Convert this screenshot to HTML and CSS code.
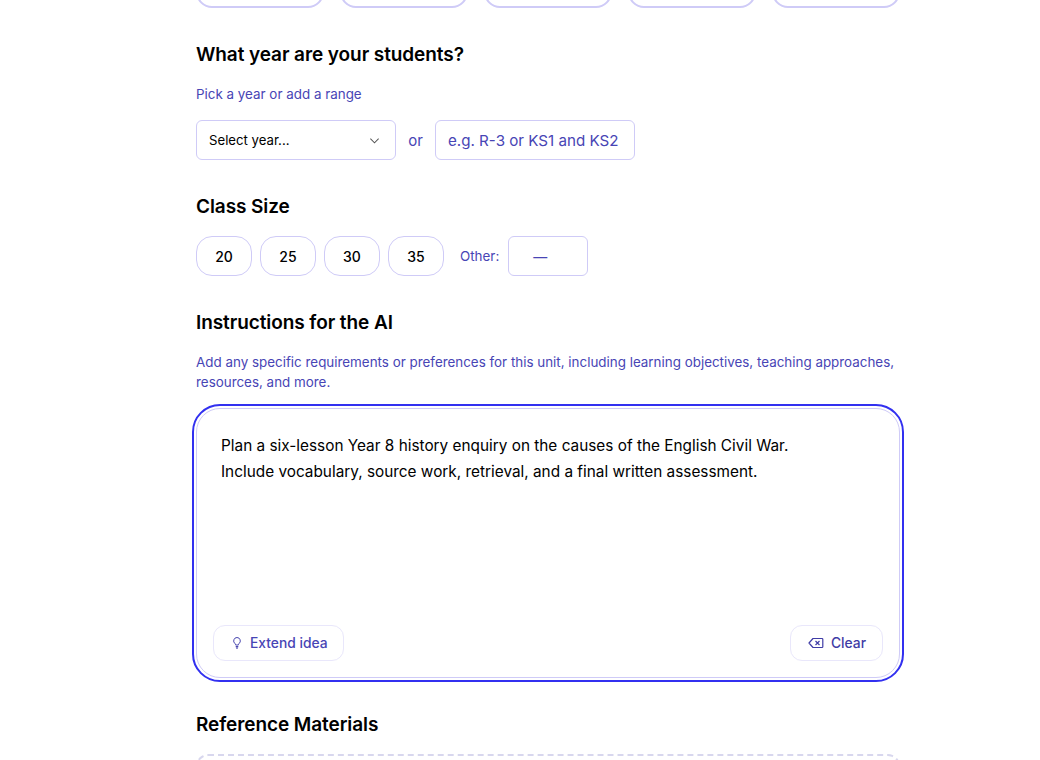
FILE: index.html
```html
<!DOCTYPE html>
<html lang="en">
<head>
<meta charset="utf-8">
<title>Unit planner</title>
<link rel="stylesheet" href="styles.css">
</head>
<body>
<main class="form">
  <div class="pills">
    <div class="pill"></div><div class="pill"></div><div class="pill"></div><div class="pill"></div><div class="pill"></div>
  </div>

  <section class="year">
    <h2>What year are your students?</h2>
    <p class="hint year-hint">Pick a year or add a range</p>
    <div class="row">
      <div class="select">
        <span>Select year...</span>
        <svg class="chev" viewBox="0 0 12 12" width="11" height="11"><path d="M1.5 4l4.5 4.5L10.5 4" fill="none" stroke="#555" stroke-width="1.1"/></svg>
      </div>
      <span class="or">or</span>
      <div class="range">e.g. R-3 or KS1 and KS2</div>
    </div>
  </section>

  <section class="size">
    <h2>Class Size</h2>
    <div class="sizes">
      <div class="num">20</div><div class="num">25</div><div class="num">30</div><div class="num">35</div>
      <span class="other">Other:</span>
      <div class="other-box">—</div>
    </div>
  </section>

  <section class="instr">
    <h2>Instructions for the AI</h2>
    <p class="hint instr-hint">Add any specific requirements or preferences for this unit, including learning objectives, teaching approaches, resources, and more.</p>
    <div class="editor">
      <div class="text">Plan a six-lesson Year 8 history enquiry on the causes of the English Civil War.<br>Include vocabulary, source work, retrieval, and a final written assessment.</div>
      <div class="tools">
        <div class="tool extend">
          <svg viewBox="0 0 12 14" width="12" height="14"><path d="M6 1.5a3.4 3.4 0 0 0-2 6.1c.4.4.6.8.6 1.4h2.8c0-.6.2-1 .6-1.4a3.4 3.4 0 0 0-2-6.1z" fill="none" stroke="#4a47b0" stroke-width="1"/><path d="M4.7 10.6h2.6M5.2 12.2h1.6" stroke="#4a47b0" stroke-width="1.2" fill="none"/></svg>
          <span>Extend idea</span>
        </div>
        <div class="tool clear">
          <svg viewBox="0 0 16 12" width="16" height="12"><path d="M5 1.5h9a.8.8 0 0 1 .8.8v7.4a.8.8 0 0 1-.8.8H5L1 6z" fill="none" stroke="#3f3ca6" stroke-width="1.2" stroke-linejoin="round"/><path d="M7.5 4l4 4M11.5 4l-4 4" stroke="#3f3ca6" stroke-width="1.2" fill="none"/></svg>
          <span>Clear</span>
        </div>
      </div>
    </div>
  </section>

  <section class="refs">
    <h2>Reference Materials</h2>
    <div class="drop"></div>
  </section>
</main>
</body>
</html>
```

FILE: styles.css
```css
html, body {
  margin: 0;
  height: 760px;
  overflow: hidden;
  background: #fff;
}
body {
  font-family: Inter, "Liberation Sans", sans-serif;
  color: #000;
}
.form {
  width: 704px;
  margin: -40px 0 0 196px;
}
h2 {
  margin: 0;
  font-size: 19px;
  line-height: 24px;
  font-weight: 600;
  letter-spacing: -0.08px;
}
.hint {
  margin: 0;
  font-size: 13.4px;
  line-height: 20px;
  color: #4845b5;
}
.pills {
  display: flex;
  gap: 16px;
}
.pill {
  flex: 1;
  height: 44px;
  border: 2px solid #cfcbf7;
  border-radius: 16px;
  background: #fff;
}
.year { margin-top: 35px; }
.year-hint { margin-top: 17px; }
.row {
  display: flex;
  align-items: center;
  margin-top: 16px;
}
.select {
  width: 200px;
  height: 40px;
  box-sizing: border-box;
  border: 1px solid #cfcbf7;
  border-radius: 6px;
  padding: 0 15px 0 12px;
  display: flex;
  align-items: center;
  justify-content: space-between;
  font-size: 13.2px;
}
.or {
  width: 39px;
  text-align: center;
  font-size: 15px;
  color: #4845b5;
}
.range {
  width: 200px;
  height: 40px;
  box-sizing: border-box;
  border: 1px solid #cfcbf7;
  border-radius: 6px;
  padding: 0 12px;
  display: flex;
  align-items: center;
  font-size: 15.15px;
  color: #4845b5;
  white-space: nowrap;
}
.size { margin-top: 35px; }
.sizes {
  display: flex;
  align-items: center;
  gap: 8px;
  margin-top: 17px;
}
.num {
  width: 56px;
  height: 40px;
  box-sizing: border-box;
  border: 1px solid #cfcbf7;
  border-radius: 16px;
  display: flex;
  align-items: center;
  justify-content: center;
  font-size: 14px;
  font-weight: 500;
}
.other {
  margin-left: 8px;
  margin-right: 1px;
  font-size: 13.4px;
  color: #4845b5;
}
.other-box {
  width: 80px;
  height: 40px;
  box-sizing: border-box;
  border: 1px solid #cfcbf7;
  border-radius: 6px;
  padding-left: 24px;
  display: flex;
  align-items: center;
  font-size: 14px;
  color: #4845b5;
}
.instr { margin-top: 35px; }
.instr-hint { margin-top: 17px; }
.editor {
  margin-top: 16px;
  height: 270px;
  box-sizing: border-box;
  border: 1px solid #cfcbf7;
  border-radius: 24px;
  outline: 2px solid #3230f0;
  outline-offset: 2px;
  padding: 16px;
  display: flex;
  flex-direction: column;
  justify-content: space-between;
}
.text {
  padding: 8px 8px 0;
  font-size: 15.35px;
  line-height: 26px;
}
.tools {
  display: flex;
  justify-content: space-between;
}
.tool {
  height: 36px;
  box-sizing: border-box;
  border: 1px solid #e9e7fb;
  border-radius: 12px;
  display: flex;
  align-items: center;
  font-size: 13.8px;
  font-weight: 500;
  color: #4845b5;
}
.extend {
  width: 131px;
  padding-left: 17px;
  gap: 7px;
}
.clear {
  width: 93px;
  padding-left: 17px;
  gap: 7px;
  color: #3f3ca6;
}
.refs { margin-top: 35px; }
.drop {
  margin-top: 17px;
  height: 120px;
  border: 2px dashed #d8d7ee;
  border-radius: 12px;
}
```
